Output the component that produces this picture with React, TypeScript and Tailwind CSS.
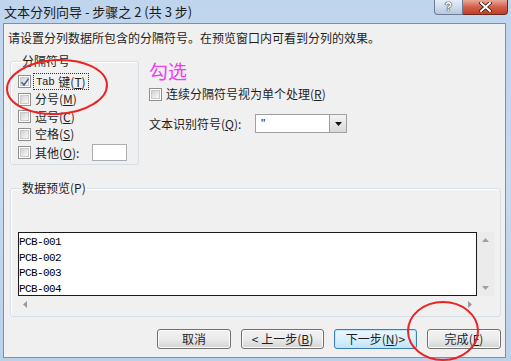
import React from "react";

const cjk = { fontFamily: '"Noto Sans CJK SC", "Liberation Sans", sans-serif' };

function Box({ checked = false }: { checked?: boolean }) {
  return (
    <span className="relative w-[13px] h-[13px] shrink-0 border border-[#8e8f8f] bg-white p-[1px]">
      <span className="block w-full h-full border border-[#c9c9c9] bg-gradient-to-br from-[#d2d2d2] to-[#f9f9f9]" />
      {checked && (
        <svg className="absolute left-[1px] top-[1px]" width="10" height="10" viewBox="0 0 10 10">
          <path d="M1.5 5.2 L4 8 L8.6 1.6" fill="none" stroke="#4a5f97" strokeWidth="1.6" />
        </svg>
      )}
    </span>
  );
}

function Key({ k }: { k: string }) {
  return (
    <span>
      (<span className="underline underline-offset-1">{k}</span>)
    </span>
  );
}

const options = [
  { label: "分号", key: "M" },
  { label: "逗号", key: "C" },
  { label: "空格", key: "S" },
];

const rows = ["PCB-001", "PCB-002", "PCB-003", "PCB-004"];

function Btn({ children, focus = false, w }: { children: React.ReactNode; focus?: boolean; w: string }) {
  return (
    <div
      className={`${w} h-[20px] rounded-[3px] border flex items-center justify-center text-[12px] text-[#1e1e1e] ${
        focus
          ? "border-[#3c7fb1] bg-gradient-to-b from-[#eaf6fd] via-[#d9f0fc] to-[#bee6fd] shadow-[inset_0_0_0_1px_#bfe6fb]"
          : "border-[#707070] bg-gradient-to-b from-[#f2f2f2] via-[#ebebeb] to-[#d3d3d3] shadow-[inset_0_0_0_1px_#fcfcfc]"
      }`}
    >
      {children}
    </div>
  );
}

export default function App() {
  return (
    <div
      className="relative w-[511px] h-[361px] overflow-hidden bg-gradient-to-b from-[#bfd5ee] via-[#c6daf0] to-[#b9d1ea] text-[#1e1e1e]"
      style={cjk}
    >
      {/* title bar */}
      <div className="h-[23px] flex items-start justify-between">
        <div className="pl-[4px] pt-[3px] text-[13px] leading-[17px] text-[#1a1a1a]">
          文本分列向导 - 步骤之 2 (共 3 步)
        </div>
        <div className="flex mr-[3px]">
          <div className="w-[29px] h-[15px] rounded-bl-[4px] border border-t-0 border-[#6a7b93] bg-gradient-to-b from-[#e6eef8] via-[#cfdcec] to-[#b4c8e0] flex items-center justify-center">
            <span
              className="text-[12px] font-bold leading-none text-white"
              style={{ fontFamily: '"Liberation Sans", sans-serif', textShadow: "0 0 1px #233, 0 0 1px #233, 0 0 1px #233" }}
            >
              ?
            </span>
          </div>
          <div className="w-[45px] h-[15px] rounded-br-[4px] border border-l-0 border-t-0 border-[#6b2a20] bg-gradient-to-b from-[#e8a899] via-[#d2604a] to-[#c03e27] flex items-center justify-center">
            <svg width="13" height="10" viewBox="0 0 13 10">
              <path d="M2 1 L11 9 M11 1 L2 9" stroke="#3b1a14" strokeWidth="3.6" strokeLinecap="square" />
              <path d="M2 1 L11 9 M11 1 L2 9" stroke="#ffffff" strokeWidth="2" strokeLinecap="square" />
            </svg>
          </div>
        </div>
      </div>

      {/* client area */}
      <div className="ml-[3px] w-[503px] h-[335px] border border-[#7f90a4] bg-[#f0f0f0] text-[12px]">
        <div className="pl-[4px] pt-[6px] leading-[16px]">
          请设置分列数据所包含的分隔符号。在预览窗口内可看到分列的效果。
        </div>

        <div className="flex mt-[8px] ml-[6px]">
          <fieldset className="w-[129px] h-[111px] border border-[#d5dfe5] rounded-[3px] pl-[7px] shadow-[inset_1px_1px_0_#fff]">
            <legend className="ml-[3px] px-[1px] leading-[14px]">分隔符号</legend>
            <div className="flex flex-col pt-[5px]">
              <div className="h-[17.5px] flex items-center">
                <Box checked />
                <span className="ml-[2px] px-[2px] h-[17px] flex items-center border border-dotted border-[#333]">
                  <span style={{ fontFamily: '"Liberation Mono", monospace' }} className="text-[11px] tracking-[-0.5px]">
                    Tab
                  </span>
                  <span className="ml-[4px]">键</span>
                  <Key k="T" />
                </span>
              </div>
              {options.map((o) => (
                <div key={o.key} className="h-[17.5px] flex items-center">
                  <Box />
                  <span className="ml-[4px]">
                    {o.label}
                    <Key k={o.key} />
                  </span>
                </div>
              ))}
              <div className="h-[19px] flex items-center">
                <Box />
                <span className="ml-[4px]">
                  其他
                  <Key k="O" />:
                </span>
                <div className="ml-[13px] w-[35px] h-[17px] border border-[#abadb3] bg-white" />
              </div>
            </div>
          </fieldset>

          <div className="ml-[10px] pt-[6px] flex flex-col">
            <div className="text-[19px] leading-[22px] text-[#f23cf0]">勾选</div>
            <div className="mt-[5px] h-[14px] flex items-center">
              <Box />
              <span className="ml-[4px]">
                连续分隔符号视为单个处理
                <Key k="R" />
              </span>
            </div>
            <div className="mt-[13px] flex items-center">
              <span className="w-[106px]">
                文本识别符号
                <Key k="Q" />:
              </span>
              <div className="w-[92px] h-[19px] border border-[#a0a0a0] bg-white flex items-center justify-between">
                <span className="pl-[5px] leading-none" style={{ fontFamily: '"Liberation Sans", sans-serif' }}>
                  "
                </span>
                <div className="w-[17px] h-[17px] border-l border-[#a0a0a0] bg-gradient-to-b from-[#f4f4f4] to-[#d8d8d8] flex items-center justify-center">
                  <svg width="7" height="4" viewBox="0 0 7 4">
                    <path d="M0 0 H7 L3.5 4 Z" fill="#111" />
                  </svg>
                </div>
              </div>
            </div>
          </div>
        </div>

        <fieldset className="ml-[6px] mt-[16px] w-[491px] h-[136px] border border-[#d5dfe5] rounded-[3px] pl-[7px] shadow-[inset_1px_1px_0_#fff]">
          <legend className="ml-[3px] px-[1px] leading-[14px]">数据预览(P)</legend>
          <div className="mt-[37px] flex">
            <div className="flex flex-col">
              <div className="w-[459px] h-[64px] border border-[#1a1a1a] bg-white pt-[2px] overflow-hidden">
                {rows.map((r) => (
                  <div
                    key={r}
                    className="h-[15.5px] leading-[15.5px] text-[11px] tracking-[-0.6px] text-black"
                    style={{ fontFamily: '"Liberation Mono", monospace' }}
                  >
                    {r}
                  </div>
                ))}
              </div>
              <div className="h-[16px] flex items-center justify-between px-[5px]">
                <svg width="4" height="7" viewBox="0 0 4 7">
                  <path d="M4 0 V7 L0 3.5 Z" fill="#9a9a9a" />
                </svg>
                <svg width="4" height="7" viewBox="0 0 4 7">
                  <path d="M0 0 V7 L4 3.5 Z" fill="#9a9a9a" />
                </svg>
              </div>
            </div>
            <div className="w-[17px] h-[64px] bg-[#ebebeb] flex flex-col items-center justify-between py-[6px]">
              <svg width="7" height="4" viewBox="0 0 7 4">
                <path d="M0 4 H7 L3.5 0 Z" fill="#a0a0a0" />
              </svg>
              <svg width="7" height="4" viewBox="0 0 7 4">
                <path d="M0 0 H7 L3.5 4 Z" fill="#a0a0a0" />
              </svg>
            </div>
          </div>
        </fieldset>

        <div className="mt-[12px] mr-[4px] flex justify-end gap-[10px]">
          <Btn w="w-[74px]">取消</Btn>
          <Btn w="w-[83px]">
            &lt; 上一步
            <Key k="B" />
          </Btn>
          <Btn w="w-[83px]" focus>
            下一步
            <Key k="N" /> &gt;
          </Btn>
          <Btn w="w-[74px]">
            完成
            <Key k="F" />
          </Btn>
        </div>
      </div>

      {/* red hand-drawn circles over the dialog */}
      <svg className="absolute inset-0 pointer-events-none" width="511" height="361">
        <ellipse cx="57" cy="87" rx="50" ry="27" fill="none" stroke="#ee2222" strokeWidth="2" transform="rotate(-3 57 87)" />
        <ellipse cx="443" cy="331" rx="35" ry="29" fill="none" stroke="#ee2222" strokeWidth="2" />
      </svg>
    </div>
  );
}
